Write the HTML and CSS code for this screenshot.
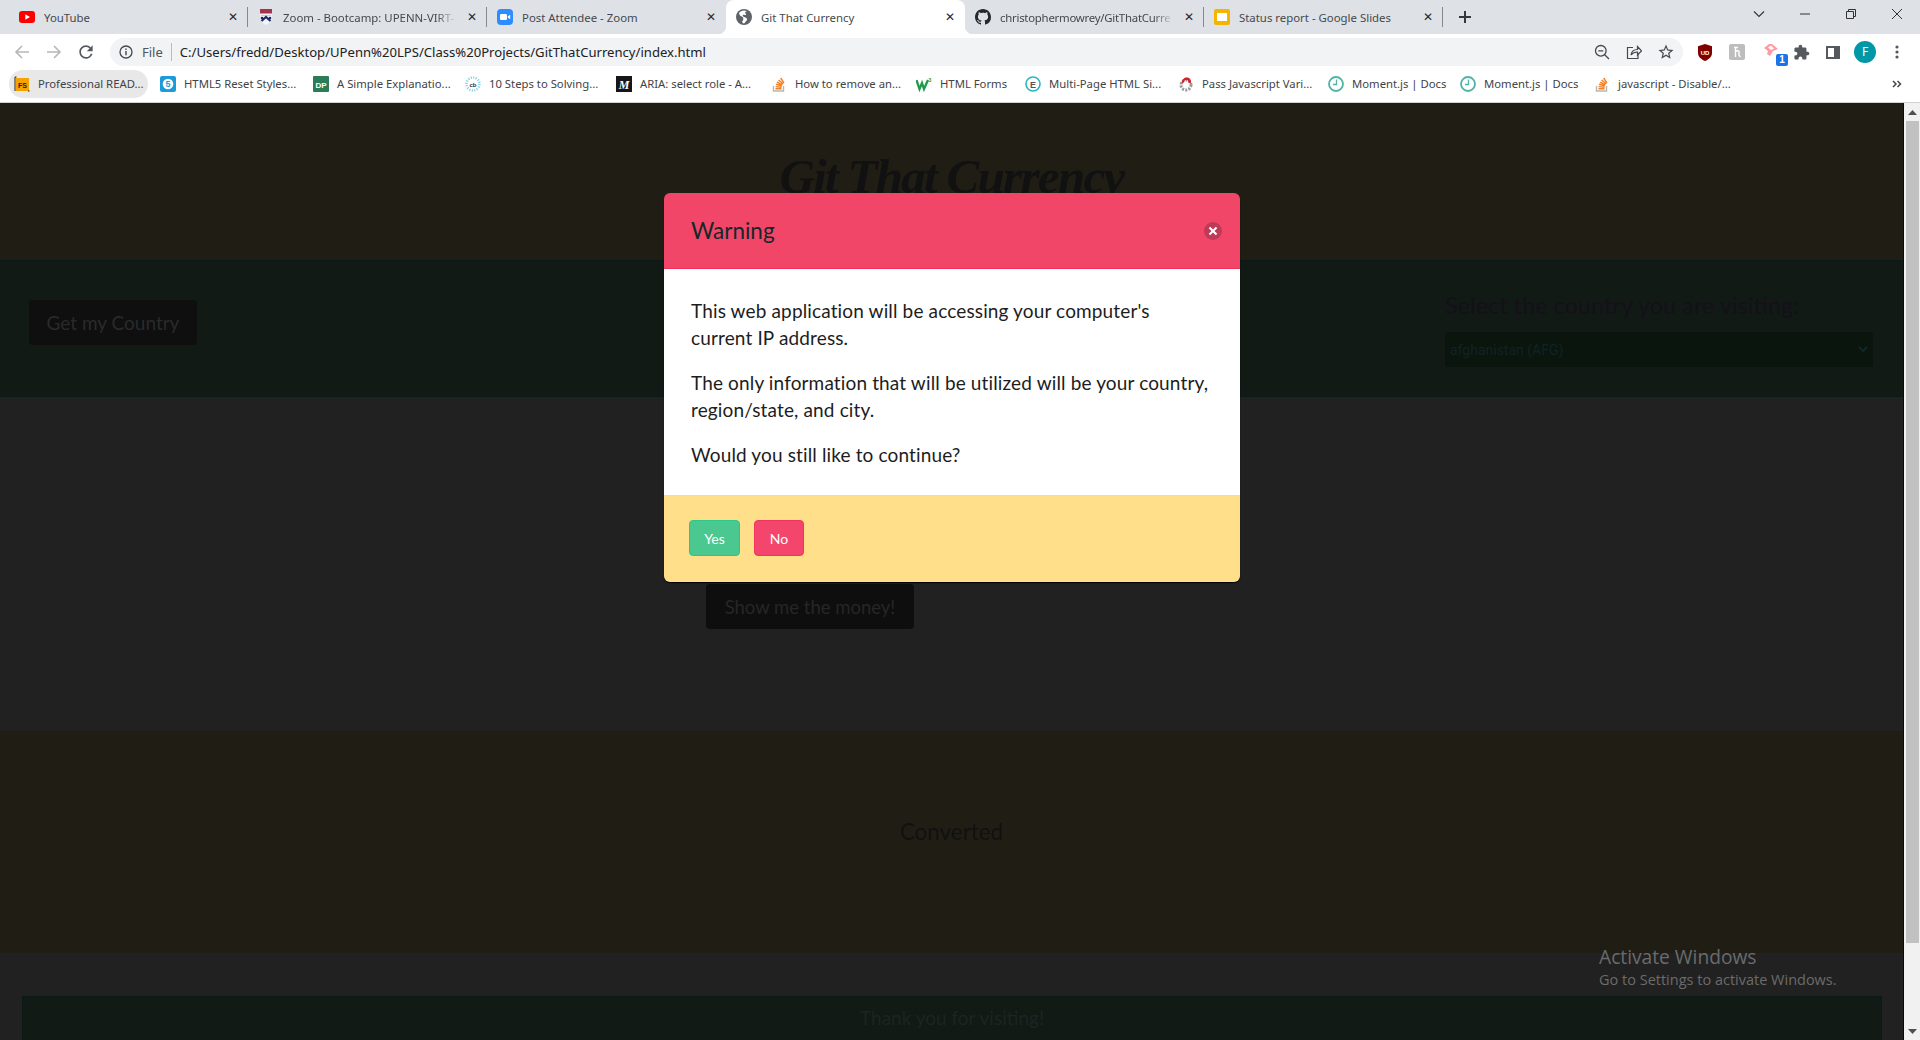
FILE: index.html
```html
<!DOCTYPE html>
<html lang="en">
<head>
    <meta charset="utf-8"/>
    <title>Git That Currency</title>
    <link rel="stylesheet" href="styles.css">
</head>
<body>
<svg class="sprites" width="0" height="0">
    <symbol id="globe" viewBox="0 0 16 16"><circle cx="8" cy="8" r="8" fill="#5f6368"/><path d="M8 1.500C6 1.500 4 2.600 3 4.200l1 2.300 3 1.700.4 2.300L6 13l1.500 1.500c.9 0 1.600-.9 2-1.700l1.600-1.800-.6-2-3-1.300-1-1.200 1.300-1 1.300.7 1-.5L9 3l2-.8C10.200 1.800 9 1.500 8 1.500z" fill="#fff"/></symbol>
    <symbol id="so" viewBox="0 0 16 16"><path d="M2.500 10v5h10v-5" fill="none" stroke="#b8b6b2" stroke-width="1.400"/><path d="M4.500 12.800h6M4.600 10.600l6 .6M5 8.300l5.900 1.500M6 6.100l5.300 2.800M7.600 3.900l4.500 4M9.700 2l3.200 5" fill="none" stroke="#f48024" stroke-width="1.400"/></symbol>
    <symbol id="clock" viewBox="0 0 16 16"><circle cx="8" cy="8" r="7" fill="#fff" stroke="#4fb3a5" stroke-width="1.800"/><path d="M8.500 3.500v5H5" fill="none" stroke="#4fb3a5" stroke-width="1.300"/></symbol>
</svg>

<div class="tabstrip">
    <div class="tab tab--sep">
        <svg class="favicon" viewBox="0 0 16 16"><rect y="2" width="16" height="12" rx="3" fill="#f00"/><path d="M6.300 5.200v5.600L11 8z" fill="#fff"/></svg>
        <span class="tab-title">YouTube</span><span class="tab-close">&#x2715;</span>
    </div>
    <div class="tab tab--sep">
        <svg class="favicon" viewBox="0 0 16 16"><path d="M2 0h12v8c0 4-3 6.500-6 8-3-1.500-6-4-6-8z" fill="#f4f4f6"/><path d="M2 0h12v4.500H2z" fill="#a8324e"/><path d="M3 6.500h10" stroke="#c9cbd6" stroke-width="1"/><path d="M3.500 12L8 8l4.500 4" fill="none" stroke="#1c2a6b" stroke-width="2.200"/><circle cx="4" cy="9" r="1.300" fill="#1c2a6b"/><circle cx="12" cy="9" r="1.300" fill="#1c2a6b"/></svg>
        <span class="tab-title tab-title--fade">Zoom - Bootcamp: UPENN-VIRT-</span><span class="tab-close">&#x2715;</span>
    </div>
    <div class="tab">
        <svg class="favicon" viewBox="0 0 16 16"><rect width="16" height="16" rx="4" fill="#2d8cff"/><rect x="3" y="5" width="7" height="6" rx="1.300" fill="#fff"/><path d="M10.800 7.500l2.400-1.800v4.600l-2.400-1.800z" fill="#fff"/></svg>
        <span class="tab-title">Post Attendee - Zoom</span><span class="tab-close">&#x2715;</span>
    </div>
    <div class="tab tab--active">
        <svg class="favicon"><use href="#globe"/></svg>
        <span class="tab-title">Git That Currency</span><span class="tab-close">&#x2715;</span>
    </div>
    <div class="tab tab--sep">
        <svg class="favicon" viewBox="0 0 16 16"><path fill="#24292f" d="M8 0C3.580 0 0 3.580 0 8c0 3.540 2.290 6.530 5.470 7.590.4.07.55-.17.55-.38 0-.19-.01-.82-.01-1.490-2.010.37-2.530-.49-2.690-.94-.09-.23-.48-.94-.82-1.130-.28-.15-.68-.52-.01-.53.63-.01 1.080.58 1.230.82.72 1.210 1.870.87 2.330.66.07-.52.28-.87.51-1.070-1.780-.2-3.640-.89-3.640-3.950 0-.87.31-1.590.82-2.150-.08-.2-.36-1.020.08-2.120 0 0 .67-.21 2.200.82.64-.18 1.320-.27 2-.27.68 0 1.360.09 2 .27 1.530-1.040 2.200-.82 2.200-.82.44 1.100.16 1.920.08 2.120.51.56.82 1.270.82 2.150 0 3.070-1.870 3.750-3.650 3.950.29.25.54.73.54 1.480 0 1.070-.01 1.930-.01 2.200 0 .21.15.46.55.38A8.013 8.013 0 0016 8c0-4.420-3.580-8-8-8z"/></svg>
        <span class="tab-title tab-title--fade tab-title--tight">christophermowrey/GitThatCurre</span><span class="tab-close">&#x2715;</span>
    </div>
    <div class="tab tab--sep">
        <svg class="favicon" viewBox="0 0 16 16"><rect width="16" height="16" rx="2" fill="#f4b400"/><rect x="3" y="4" width="10" height="8" fill="#fff"/></svg>
        <span class="tab-title">Status report - Google Slides</span><span class="tab-close">&#x2715;</span>
    </div>
    <div class="tab-new">
        <svg width="14" height="14" viewBox="0 0 14 14"><path d="M7 1v12M1 7h12" stroke="#33363a" stroke-width="2"/></svg>
    </div>
    <div class="window-controls">
        <div class="window-btn"><svg width="12" height="12" viewBox="0 0 12 12"><path d="M1 3.500l5 5 5-5" fill="none" stroke="#333" stroke-width="1.100"/></svg></div>
        <div class="window-btn"><svg width="12" height="12" viewBox="0 0 12 12"><path d="M1 6h10" stroke="#333"/></svg></div>
        <div class="window-btn"><svg width="12" height="12" viewBox="0 0 12 12"><path d="M1.500 3.500h7v7h-7zM3.500 3.500v-2h7v7h-2" fill="none" stroke="#333"/></svg></div>
        <div class="window-btn"><svg width="12" height="12" viewBox="0 0 12 12"><path d="M1 1l10 10M11 1L1 11" stroke="#333"/></svg></div>
    </div>
</div>

<div class="toolbar">
    <div class="tool-btn"><svg width="16" height="16" viewBox="0 0 16 16"><path d="M15 8H2M8 2L2 8l6 6" fill="none" stroke="#b5b7ba" stroke-width="1.600"/></svg></div>
    <div class="tool-btn"><svg width="16" height="16" viewBox="0 0 16 16"><path d="M1 8h13M8 2l6 6-6 6" fill="none" stroke="#b5b7ba" stroke-width="1.600"/></svg></div>
    <div class="tool-btn"><svg width="20" height="20" viewBox="0 0 24 24"><path fill="#55585c" d="M17.650 6.350A7.958 7.958 0 0012 4c-4.420 0-7.990 3.580-7.990 8s3.570 8 7.990 8c3.730 0 6.840-2.550 7.730-6h-2.080A5.990 5.990 0 0112 18c-3.310 0-6-2.690-6-6s2.690-6 6-6c1.660 0 3.140.69 4.220 1.780L13 11h7V4l-2.350 2.350z"/></svg></div>
    <div class="omnibox">
        <svg class="omni-info" width="14" height="14" viewBox="0 0 14 14"><circle cx="7" cy="7" r="6" fill="none" stroke="#45484c" stroke-width="1.300"/><path d="M7 6v4.300M7 3.500v1.500" stroke="#45484c" stroke-width="1.400"/></svg>
        <span class="omni-scheme">File</span>
        <span class="omni-url">C:/Users/fredd/Desktop/UPenn%20LPS/Class%20Projects/GitThatCurrency/index.html</span>
        <div class="omni-actions">
            <div class="tool-btn"><svg width="16" height="16" viewBox="0 0 16 16"><circle cx="6.800" cy="6.800" r="5.300" fill="none" stroke="#45484c" stroke-width="1.300"/><path d="M4.300 6.800h5M10.700 10.700l4.300 4.300" stroke="#45484c" stroke-width="1.300"/></svg></div>
            <div class="tool-btn"><svg width="16" height="16" viewBox="0 0 16 16"><path d="M7 3.500H1.500v11h10.500V10" fill="none" stroke="#45484c" stroke-width="1.200"/><path d="M5 11c.5-3.500 3-5.500 6.500-5.500V2.500L15.500 6.800 11.500 11V8c-3 0-5 1-6.500 3z" fill="none" stroke="#45484c" stroke-width="1.200"/></svg></div>
            <div class="tool-btn"><svg width="18" height="18" viewBox="0 0 24 24"><path fill="#45484c" d="M22 9.240l-7.190-.62L12 2 9.190 8.630 2 9.240l5.460 4.730L5.820 21 12 17.270 18.180 21l-1.630-7.030L22 9.240zM12 15.400l-3.760 2.270 1-4.280-3.320-2.880 4.380-.38L12 6.100l1.710 4.040 4.380.38-3.320 2.880 1 4.280L12 15.400z"/></svg></div>
        </div>
    </div>
    <div class="tool-btn"><svg width="16" height="17" viewBox="0 0 16 17"><path d="M8 0l7 2.200V9c0 4-3.500 6.500-7 8-3.500-1.500-7-4-7-8V2.200z" fill="#800000"/><text x="8" y="10.500" class="ext-text">UD</text></svg></div>
    <div class="tool-btn"><svg width="16" height="16" viewBox="0 0 16 16"><rect width="16" height="16" rx="2" fill="#bdbdbd"/><path d="M5 3.500h4M6.500 3.500v9.500M6.500 7.500c3-1.500 4-.5 3.500 1.500-.3 1.300 0 3 1.500 4" fill="none" stroke="#fff" stroke-width="1.400"/></svg></div>
    <div class="tool-btn tool-btn--badge"><svg width="16" height="14" viewBox="0 0 16 14"><path d="M0 4l5-4h3l6 5-5 2-3 5-3-2 1-3z" fill="#ff9aa2"/><path d="M4 3.500l3-2 3 3-3 1.500z" fill="#fff"/></svg><span class="badge">1</span></div>
    <div class="tool-btn"><svg width="17" height="17" viewBox="0 0 24 24"><path fill="#55585c" d="M20.500 11H19V7c0-1.100-.9-2-2-2h-4V3.500C13 2.120 11.880 1 10.500 1S8 2.120 8 3.500V5H4c-1.100 0-1.990.9-1.990 2v3.800H3.500c1.490 0 2.700 1.210 2.700 2.700s-1.210 2.700-2.700 2.700H2V20c0 1.100.9 2 2 2h3.800v-1.500c0-1.490 1.210-2.700 2.700-2.700 1.490 0 2.700 1.210 2.700 2.700V22H17c1.100 0 2-.9 2-2v-4h1.500c1.380 0 2.500-1.120 2.500-2.500S21.880 11 20.500 11z"/></svg></div>
    <div class="tool-btn"><svg width="14" height="13" viewBox="0 0 14 13"><rect x="1" y="1" width="12" height="11" fill="#fff" stroke="#55585c" stroke-width="2"/><rect x="8" y="1" width="5" height="11" fill="#55585c"/></svg></div>
    <div class="tool-btn"><span class="avatar">F</span></div>
    <div class="tool-btn"><svg width="4" height="14" viewBox="0 0 4 14"><circle cx="2" cy="2" r="1.600" fill="#55585c"/><circle cx="2" cy="7" r="1.600" fill="#55585c"/><circle cx="2" cy="12" r="1.600" fill="#55585c"/></svg></div>
</div>

<div class="bookmarks">
    <div class="bookmark bookmark--hover">
        <svg class="favicon" viewBox="0 0 16 16"><rect x="2" y="2" width="13" height="13" fill="#f5a300"/><text x="8.500" y="11.500" class="fs-text">FS</text><path d="M2.500 1H1v14M14 15h1.500" fill="none" stroke="#222"/></svg>
        <span>Professional READ...</span>
    </div>
    <div class="bookmark">
        <svg class="favicon" viewBox="0 0 16 16"><rect width="16" height="16" rx="2" fill="#1c9bd8"/><circle cx="8" cy="8" r="5.300" fill="#fff"/><text x="8" y="11" class="five-text">5</text></svg>
        <span>HTML5 Reset Styles...</span>
    </div>
    <div class="bookmark">
        <svg class="favicon" viewBox="0 0 16 16"><rect width="16" height="16" rx="1" fill="#2c7d57"/><text x="8" y="11.500" class="dp-text">DP</text></svg>
        <span>A Simple Explanatio...</span>
    </div>
    <div class="bookmark">
        <svg class="favicon" viewBox="0 0 16 16"><circle cx="8" cy="8" r="6.500" fill="none" stroke="#8fd3ea" stroke-width="2.500" stroke-dasharray="1.200 1.300"/><text x="8" y="10.500" class="cb-text">cb</text></svg>
        <span>10 Steps to Solving...</span>
    </div>
    <div class="bookmark">
        <svg class="favicon" viewBox="0 0 16 16"><rect width="16" height="16" fill="#16161a"/><text x="8" y="12.500" class="m-text">M</text></svg>
        <span>ARIA: select role - A...</span>
    </div>
    <div class="bookmark">
        <svg class="favicon"><use href="#so"/></svg>
        <span>How to remove an...</span>
    </div>
    <div class="bookmark">
        <svg class="favicon" viewBox="0 0 16 16"><path d="M.5 4l3 9 2.500-6 2 6L12 4" fill="none" stroke="#1d9a4b" stroke-width="2.300"/><text x="14" y="6" class="w3-text">3</text></svg>
        <span>HTML Forms</span>
    </div>
    <div class="bookmark">
        <svg class="favicon" viewBox="0 0 16 16"><circle cx="8" cy="8" r="7" fill="#fff" stroke="#28b6bd" stroke-width="1.600"/><text x="8" y="11.500" class="e-text">E</text></svg>
        <span>Multi-Page HTML Si...</span>
    </div>
    <div class="bookmark">
        <svg class="favicon" viewBox="0 0 16 16"><circle cx="8" cy="9" r="5" fill="none" stroke="#9a9a9a" stroke-width="3" stroke-dasharray="2 1.200"/><path d="M3.500 7C4 3 7 1 9.500 1.500c3 .5 4 3.500 3.500 6l-2.500-1c0-2-1-2.500-2.500-2.500-1.500.2-2.300 1.500-2.500 3z" fill="#d3222a"/></svg>
        <span>Pass Javascript Vari...</span>
    </div>
    <div class="bookmark">
        <svg class="favicon"><use href="#clock"/></svg>
        <span>Moment.js | Docs</span>
    </div>
    <div class="bookmark">
        <svg class="favicon"><use href="#clock"/></svg>
        <span>Moment.js | Docs</span>
    </div>
    <div class="bookmark">
        <svg class="favicon"><use href="#so"/></svg>
        <span>javascript - Disable/...</span>
    </div>
    <svg class="bookmarks-more" width="10" height="8" viewBox="0 0 10 8"><path d="M1 1l3 3-3 3M5.500 1l3 3-3 3" fill="none" stroke="#45484c" stroke-width="1.500"/></svg>
</div>

<div class="viewport">
    <div class="page">
        <!-- colours here are the page as it looks dimmed behind the modal -->
        <header class="hero">
            <h1>Git That Currency</h1>
        </header>
        <section class="country-bar">
            <button class="dark-btn">Get my Country</button>
            <div class="country-select">
                <label for="country">Select the country you are visiting:</label>
                <div class="select-box">
                    <span id="country">afghanistan (AFG)</span>
                    <svg width="10" height="7" viewBox="0 0 10 7"><path d="M1 1l4 4 4-4" fill="none" stroke="#11282a" stroke-width="2"/></svg>
                </div>
            </div>
        </section>
        <section class="money">
            <button class="dark-btn dark-btn--money">Show me the money!</button>
        </section>
        <section class="converted">Converted</section>
        <section class="thanks">
            <footer class="thanks-box">Thank you for visiting!</footer>
        </section>

        <div class="modal">
            <div class="modal-head">
                <p class="modal-title">Warning</p>
                <span class="modal-delete"></span>
            </div>
            <div class="modal-body">
                <p>This web application will be accessing your computer's<br>current IP address.</p>
                <p>The only information that will be utilized will be your country, region/state, and city.</p>
                <p>Would you still like to continue?</p>
            </div>
            <div class="modal-foot">
                <button class="btn btn--yes">Yes</button>
                <button class="btn btn--no">No</button>
            </div>
        </div>

        <div class="activate">
            <p class="activate-title">Activate Windows</p>
            <p class="activate-sub">Go to Settings to activate Windows.</p>
        </div>
    </div>
    <div class="scrollbar">
        <svg width="9" height="5" viewBox="0 0 9 5"><path d="M4.500 0L9 5H0z" fill="#505050"/></svg>
        <div class="scrollbar-thumb"></div>
        <svg width="9" height="5" viewBox="0 0 9 5"><path d="M4.500 5L9 0H0z" fill="#505050"/></svg>
    </div>
</div>
</body>
</html>
```

FILE: styles.css
```css
* {
    box-sizing: border-box;
}

html, body {
    margin: 0;
    height: 100%;
    overflow: hidden;
}

body {
    display: flex;
    flex-direction: column;
    font-family: "Noto Sans", Arial, sans-serif;
    font-size: 11.4px;
    color: #3c4043;
    background: #fff;
}

p, h1 {
    margin: 0;
}

.sprites {
    position: absolute;
}

.favicon {
    width: 16px;
    height: 16px;
    flex: none;
}

/* tabs */
.tabstrip {
    display: flex;
    height: 34px;
    padding-left: 9px;
    background: #dee1e6;
}

.tab {
    position: relative;
    display: flex;
    align-items: center;
    width: 239px;
    padding: 0 9px 0 10px;
    gap: 9px;
    color: #45494d;
}

.tab--sep::after {
    content: "";
    position: absolute;
    right: 0;
    top: 7px;
    height: 20px;
    width: 1px;
    background: #85888c;
}

.tab--active {
    background: #fff;
    border-radius: 8px 8px 0 0;
}

.tab--active::before,
.tab--active::after {
    content: "";
    position: absolute;
    bottom: 0;
    width: 8px;
    height: 8px;
}

.tab--active::before {
    left: -8px;
    background: radial-gradient(circle at 0 0, #dee1e6 8px, #fff 8.5px);
}

.tab--active::after {
    right: -8px;
    background: radial-gradient(circle at 100% 0, #dee1e6 8px, #fff 8.5px);
}

.tab-title {
    flex: 1;
    min-width: 0;
    white-space: nowrap;
    overflow: hidden;
}

.tab-title--fade {
    -webkit-mask-image: linear-gradient(to right, #000 88%, transparent);
    mask-image: linear-gradient(to right, #000 88%, transparent);
}

.tab-title--tight {
    letter-spacing: -.25px;
}

.tab-close {
    flex: none;
    width: 12px;
    font-size: 12px;
    font-weight: bold;
    text-align: center;
    color: #26282b;
    font-family: "DejaVu Sans", sans-serif;
}

.tab-new {
    display: flex;
    align-items: center;
    justify-content: center;
    width: 32px;
    margin-left: 6px;
}

.window-controls {
    display: flex;
    margin-left: auto;
    height: 28px;
}

.window-btn {
    display: flex;
    align-items: center;
    justify-content: center;
    width: 46px;
}

/* toolbar */
.toolbar {
    display: flex;
    align-items: center;
    height: 32px;
    padding: 4px 7px 0 6px;
    background: #fff;
}

.tool-btn {
    position: relative;
    display: flex;
    align-items: center;
    justify-content: center;
    flex: none;
    width: 32px;
    height: 28px;
}

.omnibox {
    display: flex;
    align-items: center;
    flex: 1;
    height: 28px;
    margin: 0 6px 0 8px;
    padding: 0 1px 0 9px;
    border-radius: 14px;
    background: #f1f3f4;
    font-size: 13px;
}

.omni-info {
    flex: none;
}

.omni-scheme {
    padding: 0 8px 0 9px;
    margin-right: 8px;
    border-right: 1px solid #b9bbbe;
    line-height: 18px;
    color: #50545a;
}

.omni-url {
    color: #202124;
    font-size: 13.1px;
}

.omni-actions {
    display: flex;
    margin-left: auto;
}

.ext-text {
    font: bold 6px "Liberation Sans", sans-serif;
    fill: #fff;
    text-anchor: middle;
}

.tool-btn--badge svg {
    margin-left: 6px;
    margin-top: -2px;
}

.badge {
    position: absolute;
    right: -3px;
    bottom: 0;
    width: 12px;
    height: 12px;
    border-radius: 2px;
    background: #1a73e8;
    color: #fff;
    font: bold 10px/12px "Liberation Sans", sans-serif;
    text-align: center;
}

.avatar {
    width: 22px;
    height: 22px;
    border-radius: 50%;
    background: #0097a7;
    color: #fff;
    font: 12px/22px "Noto Sans", sans-serif;
    text-align: center;
}

/* bookmarks */
.bookmarks {
    position: relative;
    display: grid;
    grid-template-columns: 146px 153px 152px 151px 155px 145px 109px 153px 150px 132px 134px 1fr;
    align-items: center;
    height: 37px;
    padding: 0 0 1px 9px;
    border-bottom: 1px solid #d0d2d5;
    background: #fff;
    font-size: 11.3px;
}

.bookmark {
    display: flex;
    align-items: center;
    gap: 8px;
    width: 139px;
    height: 28px;
    padding: 0 6px 0 5px;
    border-radius: 14px;
    white-space: nowrap;
    color: #3f4347;
}

.bookmark--hover {
    background: #e8e8e8;
}

.bookmarks-more {
    position: absolute;
    right: 18px;
    top: 14px;
}

.fs-text, .five-text, .dp-text, .cb-text, .e-text {
    font-family: "Liberation Sans", sans-serif;
    font-weight: bold;
    text-anchor: middle;
}

.fs-text { font-size: 7px; fill: #222; }
.five-text { font-size: 9px; fill: #1c9bd8; }
.dp-text { font-size: 8px; fill: #fff; }
.cb-text { font-size: 6px; fill: #333; }
.e-text { font-size: 9px; fill: #555; }

.m-text {
    font: italic bold 12px "Liberation Serif", serif;
    fill: #fff;
    text-anchor: middle;
}

.w3-text {
    font: bold 5px "Liberation Sans", sans-serif;
    fill: #1d9a4b;
    text-anchor: middle;
}

/* page */
.viewport {
    flex: 1;
    display: flex;
    min-height: 0;
}

.page {
    position: relative;
    flex: 1;
    overflow: hidden;
    background: #212121;
    font-family: Lato, "Open Sans", sans-serif;
    border-right: 1px solid #0a0a0a;
}

.hero {
    display: flex;
    justify-content: center;
    height: 157px;
    padding-top: 42px;
    background: #201d15;
}

.hero h1 {
    font: italic bold 49px/1.3 "Liberation Serif", serif;
    letter-spacing: -1.7px;
    color: #111;
}

.country-bar {
    display: flex;
    justify-content: space-between;
    height: 137px;
    padding: 39px 30px 0 29px;
    background: #111a15;
    border-top: 1px solid #0b1a16;
    border-bottom: 1px solid #0b1a16;
}

.dark-btn {
    height: 45px;
    width: 168px;
    padding: 0;
    border: 0;
    border-radius: 4px;
    background: #0f0f0f;
    color: #2a2a2a;
    font: 19px Lato, sans-serif;
}

.country-select {
    width: 428px;
    margin-top: -10px;
}

.country-select label {
    display: block;
    height: 42px;
    line-height: 30px;
    font-size: 23.5px;
    color: #15101a;
}

.select-box {
    display: flex;
    align-items: center;
    justify-content: space-between;
    height: 35px;
    padding: 0 5px 0 5px;
    border-radius: 3px;
    background: #0a150e;
    color: #0f2326;
    font: 14px Roboto, "Liberation Sans", sans-serif;
}

.money {
    height: 334px;
    padding: 187px 0 0 706px;
}

.dark-btn--money {
    width: 208px;
    background: #0e0e0e;
    color: #262626;
    font-size: 18.5px;
}

.converted {
    display: flex;
    align-items: center;
    justify-content: center;
    height: 222px;
    padding-bottom: 22px;
    background: #201d15;
    color: #111;
    font-size: 22.4px;
}

.thanks {
    height: 87px;
    padding: 43px 21px 0 22px;
}

.thanks-box {
    height: 60px;
    padding-top: 9px;
    text-align: center;
    background: #111a15;
    border: 1px solid #0b1a16;
    color: #1c2522;
    font-size: 19px;
}

/* modal */
.modal {
    position: absolute;
    left: 664px;
    top: 90px;
    width: 576px;
    border-radius: 6px;
    overflow: hidden;
    box-shadow: 0 1px 1px #000;
}

.modal-head {
    display: flex;
    align-items: center;
    justify-content: space-between;
    height: 76px;
    padding: 0 18px 0 27px;
    background: #f14668;
    border-bottom: 1px solid #ee2f58;
}

.modal-title {
    font-size: 22.5px;
    color: #12282a;
}

.modal-delete {
    position: relative;
    width: 18px;
    height: 18px;
    border-radius: 50%;
    background: #bf3a57;
}

.modal-delete::before,
.modal-delete::after {
    content: "";
    position: absolute;
    left: 4px;
    top: 8px;
    width: 10px;
    height: 2px;
    background: #fff;
    transform: rotate(45deg);
}

.modal-delete::after {
    transform: rotate(-45deg);
}

.modal-body {
    height: 226px;
    padding: 28px 21px 0 27px;
    background: #fff;
    color: #1d1d1d;
    font-size: 19px;
    letter-spacing: .14px;
    line-height: 27px;
}

.modal-body p + p {
    margin-top: 18px;
}

.modal-foot {
    display: flex;
    gap: 14px;
    height: 87px;
    padding: 24px 25px 0;
    background: #ffdf8a;
    border-top: 1px solid #dbdbdb;
}

.btn {
    height: 36px;
    padding: 0;
    border-radius: 4px;
    color: #fff;
    font: 14px Lato, sans-serif;
}

.btn--yes {
    width: 51px;
    background: #4ac88f;
    border: 1px solid #2fc68a;
}

.btn--no {
    width: 50px;
    background: #f4466c;
    border: 1px solid #f03560;
}

.activate {
    position: absolute;
    left: 1599px;
    top: 840px;
    color: #6b6b6b;
    font-family: "Open Sans", sans-serif;
}

.activate-title {
    font-size: 19.2px;
    line-height: 27px;
}

.activate-sub {
    font-size: 14.5px;
    line-height: 20px;
}

/* scrollbar */
.scrollbar {
    display: flex;
    flex-direction: column;
    align-items: center;
    flex: none;
    width: 16px;
    padding: 7px 0 6px;
    background: #f1f1f1;
}

.scrollbar-thumb {
    width: 13px;
    height: 822px;
    margin: 6px 0 auto;
    background: #c1c1c1;
}
```
